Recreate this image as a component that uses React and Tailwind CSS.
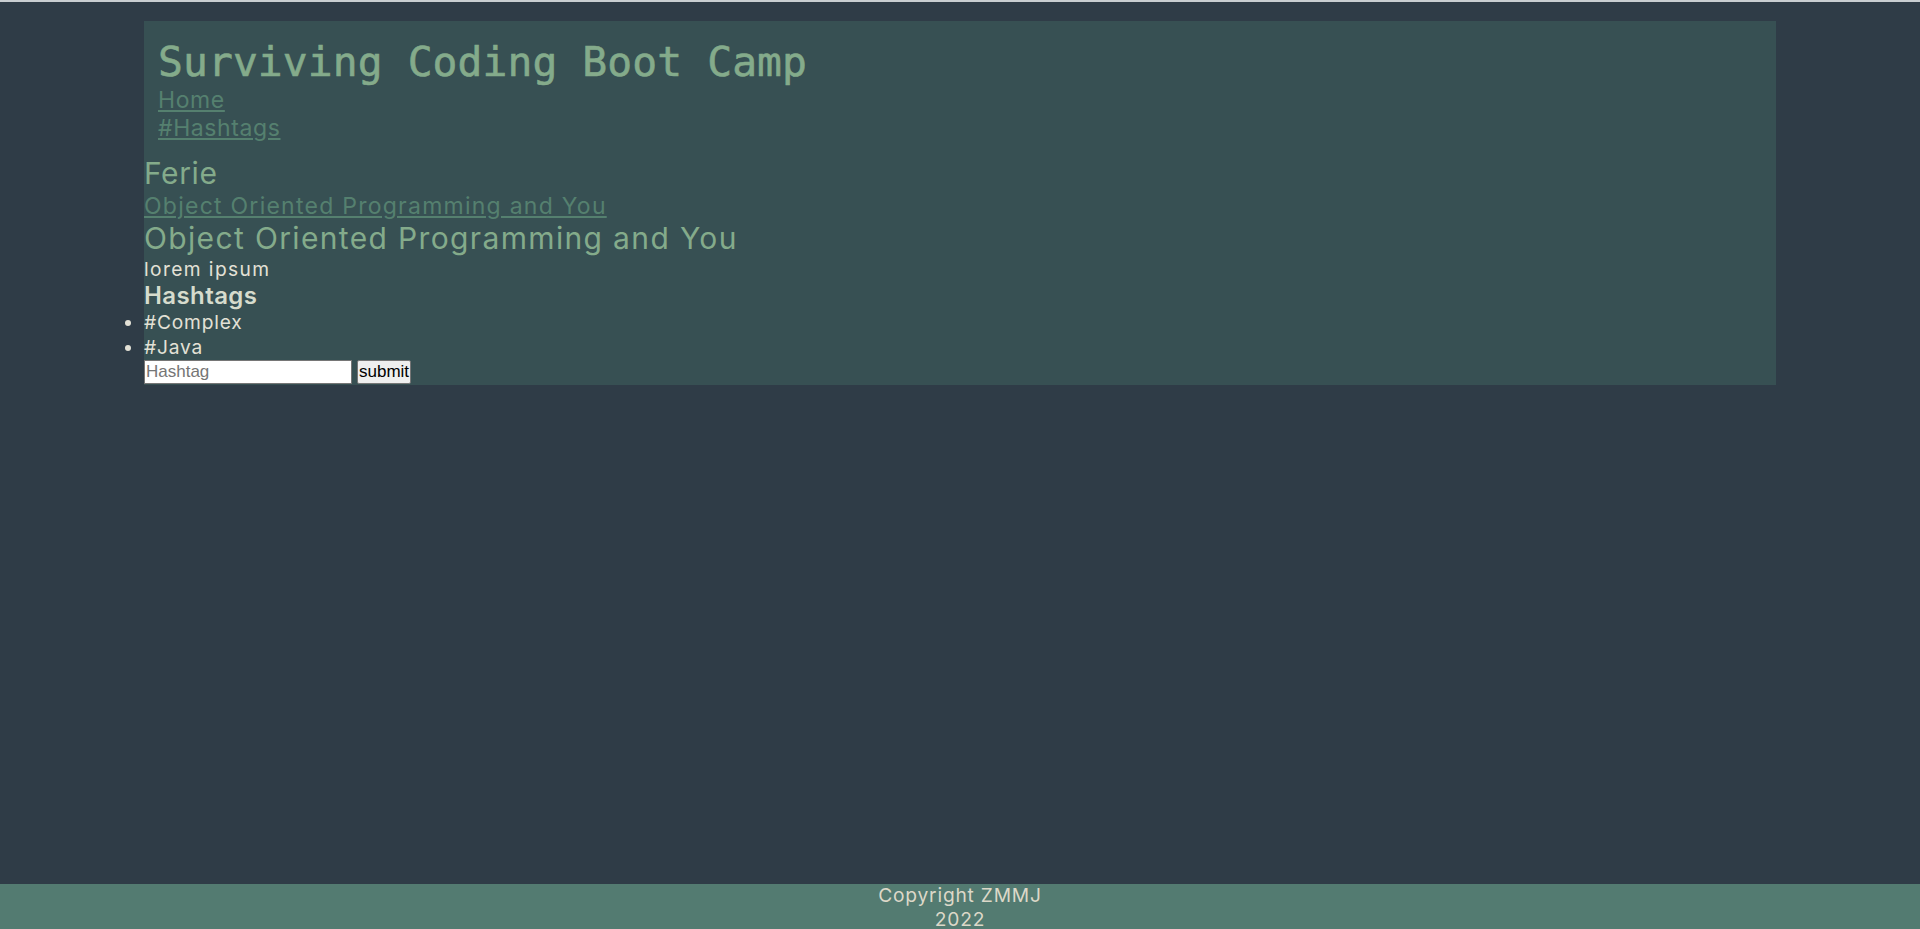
export default function App() {
  const sans = "font-['Inter','Noto_Sans',sans-serif]";
  return (
    <div className="bg-[#2f3c47]">
      <div className="h-[2px] bg-[#c9ced1]" />
      <div className={`min-h-screen flex flex-col ${sans}`}>
        <main className="w-[85%] mx-auto mt-[19px] bg-[#375053]">
          <header className="pt-[17px] pl-[14px]">
            <h1 className="font-['DejaVu_Sans_Mono',monospace] text-[41.3px] leading-[48px] text-[#84ab8b] tracking-[0.1px] [-webkit-text-stroke:0.6px_#84ab8b]">
              Surviving Coding Boot Camp
            </h1>
            <nav className="flex flex-col items-start text-[23px] leading-[28px] tracking-[0.6px]">
              <a href="#" className="underline text-[#55806f]">Home</a>
              <a href="#" className="underline text-[#55806f]">#Hashtags</a>
            </nav>
          </header>
          <section className="mt-[13px]">
            <h2 className="text-[30px] leading-[36.6px] text-[#84ab8b] tracking-[0.6px]">Ferie</h2>
            <a href="#" className="block w-fit text-[23px] leading-[28px] underline text-[#55806f] tracking-[1.25px]">
              Object Oriented Programming and You
            </a>
            <h2 className="text-[30px] leading-[37.5px] text-[#84ab8b] tracking-[1.35px]">
              Object Oriented Programming and You
            </h2>
            <p className="text-[19.2px] leading-[24px] text-[#e3e1d6] tracking-[1.4px]">lorem ipsum</p>
            <h3 className="text-[24px] leading-[29.3px] font-semibold text-[#d6dccd] tracking-[0.4px]">Hashtags</h3>
            <ul className="list-disc pl-0 text-[19.2px] leading-[23.6px] text-[#e3e1d6] tracking-[0.8px] marker:text-[#e3e1d6]">
              <li className="pt-[1px]">#Complex</li>
              <li className="pt-[1px]">#Java</li>
            </ul>
            <form className="flex items-end gap-[5px] pb-[1px] font-['Liberation_Sans',Arial,sans-serif]">
              <input
                type="text"
                placeholder="Hashtag"
                className="w-[208px] h-[24px] bg-white border border-[#767676] px-[1px] text-[17px] text-black placeholder:text-[#757575] outline-none"
              />
              <button
                type="button"
                className="h-[24px] bg-[#efefef] border border-[#767676] rounded-[2px] px-[1px] text-[17px] text-black leading-none"
              >
                submit
              </button>
            </form>
          </section>
        </main>
        <footer className="mt-auto bg-[#537b71] text-center text-[19.2px] leading-[23.4px] text-[#dcd8c8] tracking-[0.8px]">
          <div>Copyright ZMMJ</div>
          <div>2022</div>
        </footer>
      </div>
    </div>
  );
}
